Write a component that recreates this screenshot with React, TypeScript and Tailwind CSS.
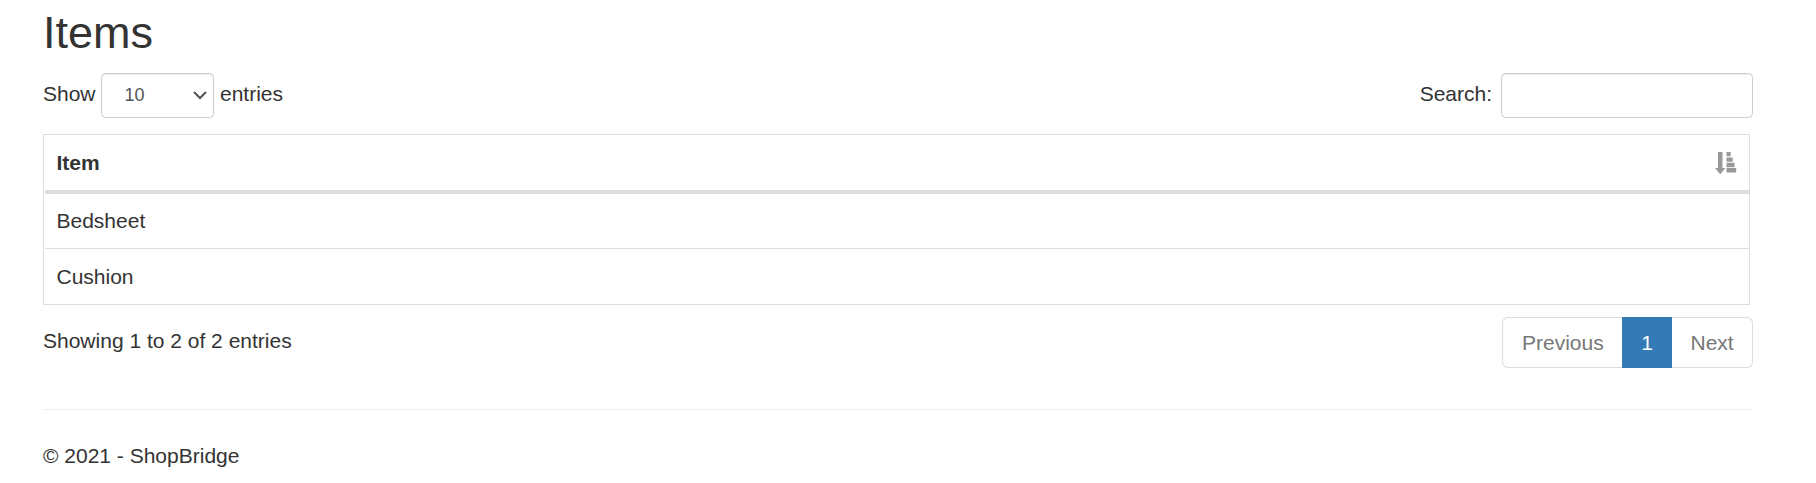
const items = ['Bedsheet', 'Cushion'];

function SortIcon() {
  return (
    <svg width="22" height="22" viewBox="0 0 22 22" fill="#999999" aria-hidden="true">
      <path d="M3 0h4.5v16h3L5.5 22h-.6L0 16h3z" />
      <path d="M11.5 0h4.2v4.3h-4.2zM11.5 5.5h6.2v4.3h-6.2zM11.5 10.8h8v4.4h-8zM11.5 16.1h9.7v4.5h-9.7z" />
    </svg>
  );
}

function Toolbar() {
  return (
    <div className="mt-[15px] flex h-[46px] items-start justify-between">
      <label className="flex items-start">
        <span className="mt-[6px] w-[58px]">Show</span>
        <span className="flex h-[45px] w-[113px] items-center justify-between rounded-[4.5px] border border-[#cccccc] bg-white pr-[6px] pb-px pl-[22.5px] text-[18px] text-[#555555] shadow-[inset_0_1px_1px_rgba(0,0,0,0.075)]">
          <span>10</span>
          <svg width="14" height="9" viewBox="0 0 14 9" fill="none" stroke="#555555" strokeWidth="2" aria-hidden="true">
            <path d="M1 1l6 6 6-6" />
          </svg>
        </span>
        <span className="mt-[6px] ml-[6px]">entries</span>
      </label>
      <label className="flex items-start">
        <span className="mt-[6px]">Search:</span>
        <input
          type="text"
          className="ml-[9px] h-[45px] w-[252px] rounded-[4.5px] border border-[#cccccc] bg-white px-[15px] text-[18px] text-[#555555] shadow-[inset_0_1px_1px_rgba(0,0,0,0.075)] outline-none"
        />
      </label>
    </div>
  );
}

function ItemTable() {
  return (
    <div className="mt-[15px] mr-[3px] h-[171px] border border-[#dddddd] pl-px">
      <div className="flex h-[59px] items-center justify-between border-b-4 border-[#dddddd] pr-3 pl-[11.5px] font-bold">
        <span>Item</span>
        <SortIcon />
      </div>
      {items.map((item) => (
        <div key={item} className="flex h-[55px] items-center border-b border-[#dddddd] pl-[11.5px] last:border-b-0">
          {item}
        </div>
      ))}
    </div>
  );
}

function Pagination() {
  return (
    <div className="mt-3 flex h-[51px] items-start justify-between">
      <div className="mt-[9px]">Showing 1 to 2 of 2 entries</div>
      <nav className="flex h-[51px] w-[251px] text-[#777777]">
        <span className="flex w-[120px] items-center rounded-l-[6px] border border-r-0 border-[#dddddd] pl-[19px]">Previous</span>
        <span className="flex w-[50px] items-center justify-center bg-[#337ab7] text-white">1</span>
        <span className="flex w-[81px] items-center rounded-r-[6px] border border-l-0 border-[#dddddd] pl-[18.5px]">Next</span>
      </nav>
    </div>
  );
}

export default function App() {
  return (
    <main className="h-[483px] overflow-hidden bg-white pr-[63px] pl-[43px] font-['Liberation_Sans',Arial,sans-serif] text-[21px] leading-[30px] text-[#333333]">
      <h2 className="mt-0 pt-2 text-[45px] leading-[50px] font-normal">Items</h2>
      <Toolbar />
      <ItemTable />
      <Pagination />
      <hr className="mt-[41px] border-[#eeeeee]" />
      <footer className="mt-[31px]">© 2021 - ShopBridge</footer>
    </main>
  );
}
